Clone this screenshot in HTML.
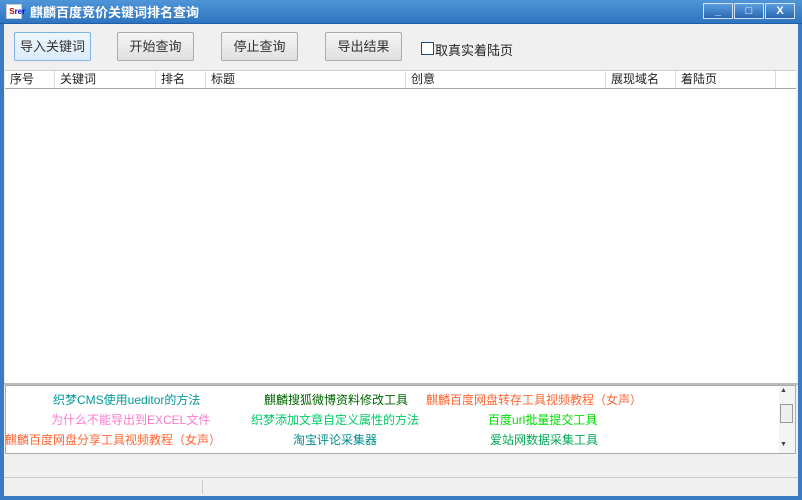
<!DOCTYPE html>
<html><head><meta charset="utf-8"><style>
*{margin:0;padding:0;box-sizing:border-box}
body{width:802px;height:500px;overflow:hidden;background:#3a7cc4;font-family:"Liberation Sans","Noto Sans CJK SC",sans-serif;font-size:12px;position:relative}
.abs{position:absolute}
#title{left:0;top:0;width:802px;height:24px;background:linear-gradient(#4f95d8,#2f74c0);border-bottom:1px solid #1d5ea8}
#client{left:4px;top:24px;width:794px;height:472px;background:#f0f0f0}
.btn{position:absolute;top:32px;width:77px;height:29px;border:1px solid #acacac;border-radius:2px;background:linear-gradient(#f4f4f4,#e0e0e0);text-align:center;line-height:27px;font-size:13px;color:#333}
.wb{position:absolute;top:3px;height:16px;width:30px;border:1px solid #cfe0f4;background:linear-gradient(#5a9ee0,#2c68b0);color:#fff;font-size:11px;text-align:center;line-height:14px;font-weight:bold}
.hd{position:absolute;top:71px;height:17px;border-right:1px solid #ddd;font-size:12px;color:#222;line-height:17px;padding-left:5px}
.lk{position:absolute;font-size:12px;line-height:14px;white-space:nowrap}
</style></head><body>
<div id="title" class="abs">
 <div class="abs" style="left:6px;top:4px;width:16px;height:15px;background:#fff;border:1px solid #ccc;font-size:8px;color:#c00;line-height:13px;font-weight:bold">&nbsp;S<span style="color:#00c">rer</span></div>
 <div class="abs" style="left:30px;top:2px;color:#fff;font-size:13px;font-weight:bold">麒麟百度竞价关键词排名查询</div>
 <div class="wb" style="left:703px">_</div>
 <div class="wb" style="left:734px">□</div>
 <div class="wb" style="left:765px">X</div>
</div>
<div id="client" class="abs"></div>
<div class="btn" style="left:14px;border-color:#7eb4ea;background:linear-gradient(#eef6fd,#dcecfc)">导入关键词</div>
<div class="btn" style="left:117px">开始查询</div>
<div class="btn" style="left:221px">停止查询</div>
<div class="btn" style="left:325px">导出结果</div>
<div class="abs" style="left:421px;top:42px;width:13px;height:13px;border:1px solid #1c4c7c;background:#fff"></div>
<div class="abs" style="left:435px;top:40px;font-size:13px;color:#222">取真实着陆页</div>
<div class="abs" style="left:5px;top:70px;width:791px;height:313px;background:#fff;border-top:1px solid #ccc"></div>
<div class="abs" style="left:5px;top:88px;width:791px;height:1px;background:#a0a8b0"></div>
<div class="hd" style="left:5px;width:50px">序号</div>
<div class="hd" style="left:55px;width:101px">关键词</div>
<div class="hd" style="left:156px;width:50px">排名</div>
<div class="hd" style="left:206px;width:200px">标题</div>
<div class="hd" style="left:406px;width:200px">创意</div>
<div class="hd" style="left:606px;width:70px">展现域名</div>
<div class="hd" style="left:676px;width:100px">着陆页</div>
<div class="abs" style="left:4px;top:383px;width:794px;height:2px;background:#bbb"></div>
<div class="abs" style="left:5px;top:385px;width:791px;height:69px;background:#fff;border:1px solid #aaa"></div>
<div class="abs" style="left:779px;top:386px;width:16px;height:67px;background:#f4f4f4"></div>
<div class="abs" style="left:780px;top:387px;font-size:7px;color:#444">▲</div>
<div class="abs" style="left:780px;top:404px;width:13px;height:19px;border:1px solid #999;background:#eee"></div>
<div class="abs" style="left:780px;top:441px;font-size:7px;color:#444">▼</div>
<div class="lk" style="left:53px;top:393px;color:#009999">织梦CMS使用ueditor的方法</div>
<div class="lk" style="left:264px;top:393px;color:#006600">麒麟搜狐微博资料修改工具</div>
<div class="lk" style="left:426px;top:393px;color:#ff6633">麒麟百度网盘转存工具视频教程（女声）</div>
<div class="lk" style="left:51px;top:413px;color:#ff77cc">为什么不能导出到EXCEL文件</div>
<div class="lk" style="left:251px;top:413px;color:#00cc66">织梦添加文章自定义属性的方法</div>
<div class="lk" style="left:488px;top:413px;color:#00dd00">百度url批量提交工具</div>
<div class="lk" style="left:5px;top:433px;color:#ff6633">麒麟百度网盘分享工具视频教程（女声）</div>
<div class="lk" style="left:293px;top:433px;color:#008b8b">淘宝评论采集器</div>
<div class="lk" style="left:490px;top:433px;color:#00aa55">爱站网数据采集工具</div>
<div class="abs" style="left:4px;top:477px;width:794px;height:1px;background:#ccc"></div>
<div class="abs" style="left:202px;top:480px;width:1px;height:14px;background:#ccc"></div>
</body></html>
